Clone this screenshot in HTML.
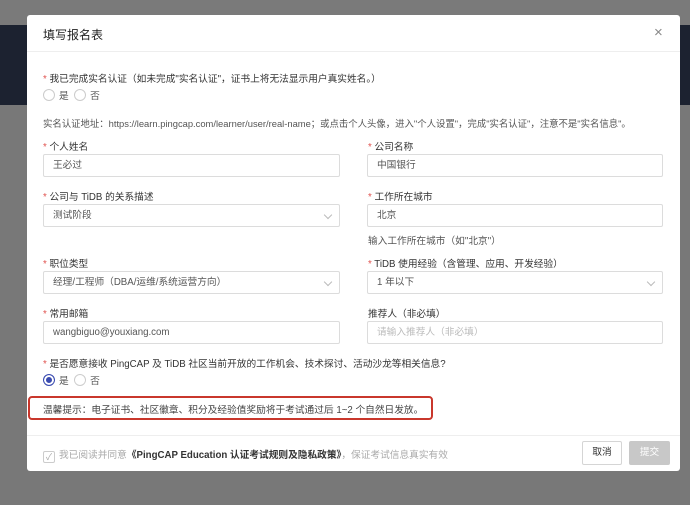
<!DOCTYPE html><html><head><meta charset="utf-8"><style>
*{box-sizing:border-box;margin:0;padding:0}
body{width:690px;height:479px;overflow:hidden;background:#7a7a7a;font-family:"Liberation Sans","Noto Sans CJK SC",sans-serif;font-size:9.7px;color:#333;position:relative}
.bg1{position:absolute;left:0;top:25px;width:690px;height:80px;background:#1c2230}
.bg2{position:absolute;left:0;top:105px;width:690px;height:400px;background:#787878}
.modal{position:absolute;left:27px;top:15px;width:653px;height:456px;background:#fff;border-radius:3px}
.a{position:absolute;white-space:nowrap}
.r{color:#e0524f}
.in{position:absolute;height:23px;border:1px solid #dcdcdc;border-radius:2px;padding:0 9px;line-height:21px;font-size:9.7px;color:#555}
.chev{position:absolute;right:8px;top:7px;width:6px;height:6px;border-right:1px solid #bbb;border-bottom:1px solid #bbb;transform:rotate(45deg)}
.rad{display:inline-block;width:12px;height:12px;border:1px solid #ccc;border-radius:50%;vertical-align:-2px;margin-right:4px}
</style></head><body>
<div class="bg1"></div><div class="bg2"></div>
<div class="modal">
<div class="a" style="left:16px;top:11px;font-size:12px;color:#222">填写报名表</div>
<div class="a" style="left:627px;top:9px;font-size:15px;color:#888">×</div>
<div class="a" style="left:0;top:36px;width:653px;height:1px;background:#eee"></div>
<div class="a" style="left:16px;top:56px"><span class="r">* </span>我已完成实名认证（如未完成"实名认证"，证书上将无法显示用户真实姓名。）</div>
<div class="a" style="left:16px;top:73px;color:#555"><span class="rad"></span>是 &nbsp;<span class="rad"></span>否</div>
<div class="a" style="left:16px;top:101px;color:#555;font-size:9.4px">实名认证地址：https://learn.pingcap.com/learner/user/real-name；或点击个人头像，进入"个人设置"，完成"实名认证"，注意不是"实名信息"。</div>
<div class="a" style="left:16px;top:124px"><span class="r">* </span>个人姓名</div>
<div class="a" style="left:341px;top:124px"><span class="r">* </span>公司名称</div>
<div class="in" style="left:16px;top:139px;width:297px">王必过</div>
<div class="in" style="left:340px;top:139px;width:296px">中国银行</div>
<div class="a" style="left:16px;top:174px"><span class="r">* </span>公司与 TiDB 的关系描述</div>
<div class="a" style="left:341px;top:174px"><span class="r">* </span>工作所在城市</div>
<div class="in" style="left:16px;top:189px;width:297px">测试阶段<span class="chev"></span></div>
<div class="in" style="left:340px;top:189px;width:296px">北京</div>
<div class="a" style="left:341px;top:218px;color:#555">输入工作所在城市（如"北京"）</div>
<div class="a" style="left:16px;top:241px"><span class="r">* </span>职位类型</div>
<div class="a" style="left:341px;top:241px"><span class="r">* </span>TiDB 使用经验（含管理、应用、开发经验）</div>
<div class="in" style="left:16px;top:256px;width:297px">经理/工程师（DBA/运维/系统运营方向）<span class="chev"></span></div>
<div class="in" style="left:340px;top:256px;width:296px">1 年以下<span class="chev"></span></div>
<div class="a" style="left:16px;top:291px"><span class="r">* </span>常用邮箱</div>
<div class="a" style="left:341px;top:291px">推荐人（非必填）</div>
<div class="in" style="left:16px;top:306px;width:297px">wangbiguo@youxiang.com</div>
<div class="in" style="left:340px;top:306px;width:296px;color:#bbb">请输入推荐人（非必填）</div>
<div class="a" style="left:16px;top:341px"><span class="r">* </span>是否愿意接收 PingCAP 及 TiDB 社区当前开放的工作机会、技术探讨、活动沙龙等相关信息?</div>
<div class="a" style="left:16px;top:358px;color:#555"><span class="rad" style="border:1px solid #3a4bb0;box-shadow:inset 0 0 0 2px #fff;background:#3a4bb0"></span>是 &nbsp;<span class="rad"></span>否</div>
<div class="a" style="left:1px;top:381px;width:405px;height:24px;border:2px solid #c9372c;border-radius:4px"></div>
<div class="a" style="left:16px;top:387px;color:#444">温馨提示：电子证书、社区徽章、积分及经验值奖励将于考试通过后 1~2 个自然日发放。</div>
<div class="a" style="left:0;top:420px;width:653px;height:1px;background:#eee"></div>
<div class="a" style="left:16px;top:432px;color:#aaa"><span class="rad" style="border-radius:2px;border-color:#ccc;font-size:9px;line-height:10px;text-align:center;color:#aaa">✓</span>我已阅读并同意<b style="color:#333">《PingCAP Education 认证考试规则及隐私政策》</b>，保证考试信息真实有效</div>
<div class="a" style="left:555px;top:426px;width:40px;height:24px;border:1px solid #d5d5d5;border-radius:2px;text-align:center;line-height:22px;color:#333">取消</div>
<div class="a" style="left:602px;top:426px;width:41px;height:24px;background:#c8c8c8;border-radius:2px;text-align:center;line-height:24px;color:#fff">提交</div>
</div>
</body></html>
